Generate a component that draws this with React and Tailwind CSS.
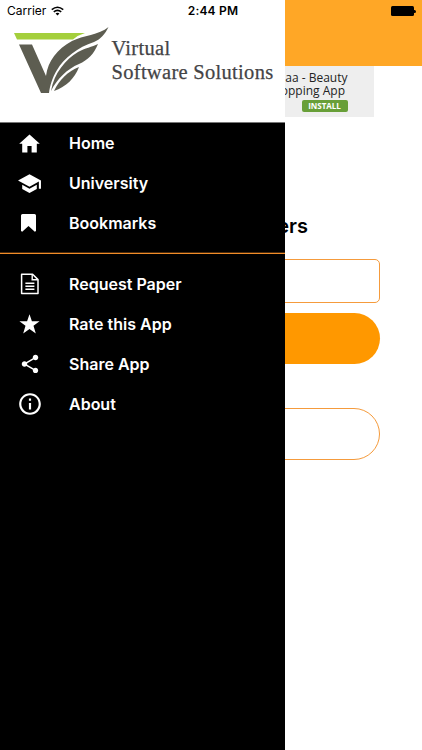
import React from 'react';
import {
    MdSchool,
    MdShare,
    MdInfoOutline,
} from 'react-icons/md';

const HomeIcon = () => (
    <svg viewBox="0 0 21 19" className="w-[21px] h-[19px]" fill="currentColor">
        <path d="M10.5 0.4L20.8 9.8H17.8V18.4H12.6V12H8.4V18.4H3.2V9.8H0.2Z" />
    </svg>
);

const BookmarkIcon = () => (
    <svg viewBox="0 0 15 18" className="w-[15px] h-[18px] mr-[3px]" fill="currentColor">
        <path d="M1.5 0H13.5Q15 0 15 1.5V17L13.8 17.8L7.5 12L1.2 17.8L0 17V1.5Q0 0 1.5 0Z" />
    </svg>
);

const FileIcon = () => (
    <svg viewBox="0 0 20 22" className="w-5 h-[22px]" fill="none" stroke="currentColor">
        <path d="M1.6 1.2H12.6L18 6.6V20.6H1.6Z" strokeWidth="1.5" strokeLinejoin="round" />
        <path d="M12.2 1.2V6.8H18" strokeWidth="1.4" />
        <path d="M5.4 10.2H14.4M5.4 13.2H14.4M5.4 16.2H14.4" strokeWidth="1.4" />
    </svg>
);

const StarIcon = () => (
    <svg viewBox="0 0 20 20" className="w-[21px] h-[21px]" fill="currentColor">
        <path d="M10 0.3L12.3 7H19.6L13.8 11.2L16 18.6L10 14.3L4 18.6L6.2 11.2L0.4 7H7.7Z" />
    </svg>
);

const mainItems = [
    { label: 'Home', icon: <HomeIcon /> },
    { label: 'University', icon: <MdSchool className="w-[25px] h-[25px]" /> },
    { label: 'Bookmarks', icon: <BookmarkIcon /> },
];

const otherItems = [
    { label: 'Request Paper', icon: <FileIcon /> },
    { label: 'Rate this App', icon: <StarIcon /> },
    { label: 'Share App', icon: <MdShare className="w-[22px] h-[22px]" /> },
    { label: 'About', icon: <MdInfoOutline className="w-[26px] h-[26px]" /> },
];

const MenuItem = ({ icon, label }) => (
    <li className="flex items-center h-10 text-white">
        <span className="w-[59px] flex justify-center shrink-0">{icon}</span>
        <span className="pl-[10px] text-[16px] font-semibold">{label}</span>
    </li>
);

const Logo = () => (
    <svg viewBox="0 0 98 70" className="w-[98px] h-[70px] shrink-0">
        <path d="M2 8H73Q66 10 61 14.5H5Z" fill="#a4cf3c" />
        <g fill="#5d5d51">
            <path d="M7 19.5H20L34 51C36 36 45 24 60 16C71 10.5 87 10 96.5 2C93 9 89 14 82 17C66 22 52 33 45 45C40 53 38 61 37 68H29Z" />
            <path d="M86 19C82 29 76 35 67 39C55 44 45 54 39 66C42 48 54 34 66 27C73 23 80 22 86 19Z" />
            <path d="M67 42C63 53 54 62 42 66C47 55 56 46 67 42Z" />
        </g>
    </svg>
);

const StatusBar = () => (
    <div className="absolute top-0 inset-x-0 h-[22px] grid grid-cols-3 items-center pl-[7px] pr-[6px] text-[12px] text-black">
        <div className="flex items-center gap-[5px]">
            <span>Carrier</span>
            <svg viewBox="0 0 14 10" className="w-[13px] h-[10px]" fill="none" stroke="currentColor" strokeWidth="1.7">
                <path d="M0.8 3.6Q7 -1.6 13.2 3.6" />
                <path d="M3 6Q7 2.6 11 6" />
                <path d="M4.9 7.7Q7 6 9.1 7.7L7 9.9Z" fill="currentColor" stroke="none" />
            </svg>
        </div>
        <span className="pl-[3px] text-center font-semibold tracking-[0.2px]">2:44 PM</span>
        <div className="flex items-center justify-end">
            <span className="w-[23px] h-[10px] bg-black rounded-[1.5px]" />
            <span className="w-[1.5px] h-[3px] ml-[0.5px] bg-black rounded-r-sm" />
        </div>
    </div>
);

const HomeScreen = () => (
    <div className="h-full flex flex-col">
        <header className="h-[66px] bg-[#ffa726]" />
        <div className="w-[320px] h-[51px] ml-[54px] bg-[#eeeeee] flex justify-end pr-[26.5px] font-['Open_Sans',sans-serif] text-[#222222]">
            <div className="flex flex-col items-end pt-[5px] text-[12px] leading-[13px]">
                <span>aa - Beauty</span>
                <span className="pr-[2.5px]">Shopping App</span>
                <span className="mt-[3px] w-[46px] h-3 rounded-[2px] bg-[#689f38] text-white text-[8px] leading-3 font-bold text-center">
                    INSTALL
                </span>
            </div>
        </div>
        <main className="px-[42px] flex flex-col">
            <h1 className="mt-[95px] h-7 leading-7 pr-[72px] text-right text-[20px] font-semibold text-black">Papers</h1>
            <div className="mt-[19px] h-11 border border-[#f59b3c] rounded-[5px]" />
            <div className="mt-[10px] h-[51px] rounded-full bg-[#ff9800]" />
            <div className="mt-[44px] h-[52px] border border-[#f59b3c] rounded-full" />
        </main>
    </div>
);

const Drawer = () => (
    <aside className="absolute top-0 left-0 w-[285px] h-full bg-black">
        <div className="h-[123px] bg-white border-b border-[#777777] pt-[25px] pl-3 flex items-start">
            <Logo />
            <div className="pt-[12px] pl-[1.5px] font-['Liberation_Serif',serif] text-[20.5px] tracking-[0.3px] leading-[23.5px] text-[#444446] whitespace-nowrap [-webkit-text-stroke:0.25px_#444446]">
                <p>Virtual</p>
                <p>Software Solutions</p>
            </div>
        </div>
        <ul>
            {mainItems.map((item) => (
                <MenuItem key={item.label} {...item} />
            ))}
        </ul>
        <div className="mt-[9px] mb-[10px] h-[2px] bg-[#f08c28] border-t border-[#4a2a0c]" />
        <ul>
            {otherItems.map((item) => (
                <MenuItem key={item.label} {...item} />
            ))}
        </ul>
    </aside>
);

const App = () => {
    return (
        <div className="relative w-full h-screen overflow-hidden bg-white font-['Inter',sans-serif]">
            <HomeScreen />
            <Drawer />
            <StatusBar />
        </div>
    );
};

export default App;
